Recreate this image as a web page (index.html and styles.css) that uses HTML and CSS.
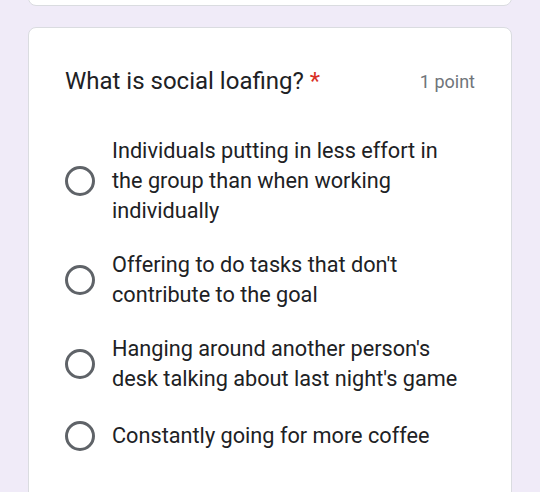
FILE: index.html
```html
<!DOCTYPE html>
<html lang="en">
<head>
<meta charset="UTF-8" />
<meta name="viewport" content="width=device-width, initial-scale=1" />
<title>Quiz question</title>
<link rel="stylesheet" href="styles.css">
</head>
<body>

  <!-- previous question card, mostly scrolled away -->
  <div class="card card-prev"></div>

  <div class="card question">
    <div class="question-head">
      <div class="question-title">What is social loafing? <span class="required">*</span></div>
      <div class="points">1 point</div>
    </div>

    <div class="options">
      <label class="option">
        <span class="radio"></span>
        <span class="option-text">Individuals putting in less effort in the group than when working individually</span>
      </label>
      <label class="option">
        <span class="radio"></span>
        <span class="option-text">Offering to do tasks that don't contribute to the goal</span>
      </label>
      <label class="option">
        <span class="radio"></span>
        <span class="option-text">Hanging around another person's desk talking about last night's game</span>
      </label>
      <label class="option">
        <span class="radio"></span>
        <span class="option-text">Constantly going for more coffee</span>
      </label>
    </div>
  </div>

</body>
</html>
```

FILE: styles.css
```css
body {
  margin: 0;
  background: #f0ebf8;
  font-family: Roboto, "Liberation Sans", sans-serif;
  color: #202124;
  display: flex;
  flex-direction: column;
  gap: 21px;
  overflow: hidden;
  height: 492px;
}
.card {
  background: #fff;
  border: 1px solid #dadce0;
  border-radius: 8px;
  margin: 0 28px;
  box-sizing: border-box;
  width: 484px;
  flex-shrink: 0;
}
.card-prev {
  height: 46px;
  margin-top: -40px;
}
.question {
  padding: 38px 36px 40px 36px;
}
.question-head {
  display: flex;
  justify-content: space-between;
  align-items: center;
}
.question-title {
  font-size: 24px;
  line-height: 30px;
}
.required {
  color: #d93025;
}
.points {
  font-size: 18px;
  color: #70757a;
}
.options {
  margin-top: 28px;
  display: flex;
  flex-direction: column;
}
.option {
  display: flex;
  align-items: center;
  gap: 17px;
  padding: 12px 0;
}
.option:last-child {
  padding-top: 15px;
}
.radio {
  width: 24px;
  height: 24px;
  border: 3px solid #5f6368;
  border-radius: 50%;
  flex-shrink: 0;
}
.option-text {
  font-size: 21.7px;
  line-height: 30px;
  max-width: 352px;
}
```
